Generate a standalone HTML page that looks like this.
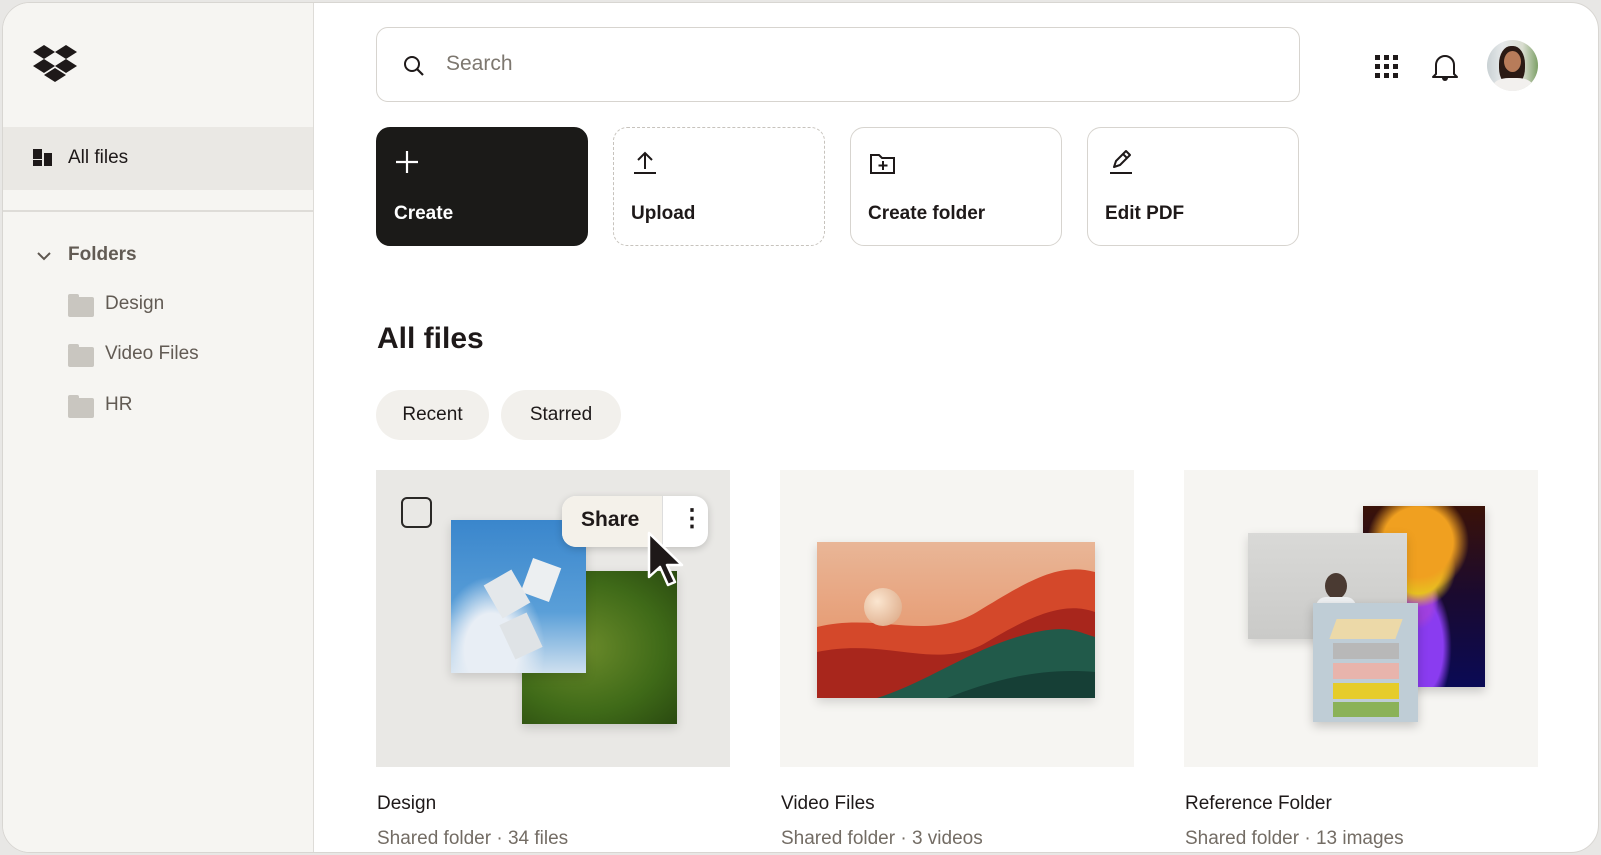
<!DOCTYPE html>
<html><head><meta charset="utf-8"><style>
*{box-sizing:border-box;margin:0;padding:0}
body{width:1601px;height:855px;background:#e8e7e5;font-family:"Liberation Sans",sans-serif;overflow:hidden;position:relative;color:#1e1919}
.frame{position:absolute;left:2px;top:2px;width:1597px;height:851px;background:#fff;border:1px solid #d8d6d2;border-radius:28px;overflow:hidden}
.side{position:absolute;left:0;top:0;width:311px;height:100%;background:#f6f5f2;border-right:1.5px solid #dedcd8}
.a{position:absolute}
.sel{left:0;top:124px;width:310px;height:63px;background:#eae8e4}
.t{position:absolute;white-space:nowrap}
.btn{position:absolute;top:124px;width:212px;height:119px;border:1.5px solid #d7d4cf;border-radius:14px}
.btn .t{left:17px;top:75px;font-size:19px;font-weight:bold}
.chip{position:absolute;top:387px;height:50px;background:#f2f0ec;border-radius:25px;font-size:19px;line-height:50px;text-align:center}
.card{position:absolute;top:467px;width:354px;height:297px;background:#f6f5f2;overflow:hidden}
.ct{position:absolute;top:790px;font-size:19px}
.cs{position:absolute;top:825px;font-size:19px;color:#736c64}
.fold{position:absolute;left:65px;width:26px;height:20px;background:#c9c6c0;border-radius:2px}
.fold:before{content:"";position:absolute;left:0;top:-3px;width:11px;height:4px;background:#c9c6c0;border-radius:2px 2px 0 0}
.ft{position:absolute;left:102px;font-size:19px;color:#625b54}
</style></head><body>
<div class="frame">
<div class="side">
<svg class="a" style="left:30px;top:42px" width="45" height="38" viewBox="0 0 45 38"><g fill="#1e1919"><path d="M11 0L22 7 11 14 0 7z"/><path d="M33 0L44 7 33 14 22 7z"/><path d="M11 14L22 21 11 28 0 21z"/><path d="M33 14L44 21 33 28 22 21z"/><path d="M22 23L33 30 22 37 11 30z"/></g></svg>
<div class="a sel"></div>
<svg class="a" style="left:30px;top:146px" width="20" height="18"><rect x="0" y="0" width="9" height="10" fill="#1e1919"/><rect x="0" y="11" width="9" height="6" fill="#1e1919"/><rect x="11" y="4" width="8" height="13" fill="#1e1919"/></svg>
<div class="t" style="left:65px;top:144px;font-size:19px">All files</div>
<div class="a" style="left:0;top:207px;width:310px;height:1.5px;background:#dedcd8"></div>
<svg class="a" style="left:33px;top:247px" width="16" height="12"><path d="M2 3l6 6 6-6" stroke="#5e5750" stroke-width="2" fill="none"/></svg>
<div class="t" style="left:65px;top:241px;font-size:19px;font-weight:bold;color:#625b54">Folders</div>
<div class="fold" style="top:294px"></div><div class="t ft" style="top:290px">Design</div>
<div class="fold" style="top:344px"></div><div class="t ft" style="top:340px">Video Files</div>
<div class="fold" style="top:395px"></div><div class="t ft" style="top:391px">HR</div>
</div>
<div class="a" style="left:373px;top:24px;width:924px;height:75px;border:1.5px solid #d7d4cf;border-radius:12px"></div>
<svg class="a" style="left:399px;top:51px" width="24" height="24"><circle cx="10" cy="10" r="7" stroke="#1e1919" stroke-width="2" fill="none"/><path d="M15 15l6 6" stroke="#1e1919" stroke-width="2.2"/></svg>
<div class="t" style="left:443px;top:49px;font-size:21px;color:#7d776f">Search</div>
<svg class="a" style="left:1372px;top:52px" width="25" height="25"><g fill="#1e1919"><rect x="0" y="0" width="5" height="5"/><rect x="9" y="0" width="5" height="5"/><rect x="18" y="0" width="5" height="5"/><rect x="0" y="9" width="5" height="5"/><rect x="9" y="9" width="5" height="5"/><rect x="18" y="9" width="5" height="5"/><rect x="0" y="18" width="5" height="5"/><rect x="9" y="18" width="5" height="5"/><rect x="18" y="18" width="5" height="5"/></g></svg>
<svg class="a" style="left:1428px;top:49px" width="28" height="30"><path d="M5 22V13a9 9 0 0 1 18 0v9l3 3H2z" stroke="#1e1919" stroke-width="2" fill="none" stroke-linejoin="round"/><path d="M11 26a3 3 0 0 0 6 0" fill="#1e1919"/></svg>
<div class="a" style="left:1484px;top:37px;width:51px;height:51px;border-radius:50%;background:linear-gradient(90deg,#c9d1d4,#e6e9ea 30%,#d9ddd0 70%,#7da067);overflow:hidden"><div class="a" style="left:12px;top:6px;width:26px;height:40px;border-radius:45%;background:#2a1a14"></div><div class="a" style="left:17px;top:11px;width:17px;height:21px;border-radius:50%;background:#b77c5a"></div><div class="a" style="left:6px;top:38px;width:40px;height:20px;border-radius:40%;background:#f2f0ee"></div></div>
<div class="btn" style="left:373px;background:#1b1a18;border-color:#1b1a18"><svg class="a" style="left:17px;top:21px" width="26" height="26"><path d="M13 2v22M2 13h22" stroke="#fff" stroke-width="2.2"/></svg><div class="t" style="color:#fff">Create</div></div>
<div class="btn" style="left:610px;border-style:dashed;border-color:#c7c3bd"><svg class="a" style="left:18px;top:22px" width="26" height="26"><path d="M13 19V3M6 10l7-7 7 7M2 23h22" stroke="#1e1919" stroke-width="2" fill="none"/></svg><div class="t">Upload</div></div>
<div class="btn" style="left:847px"><svg class="a" style="left:18px;top:24px" width="28" height="24"><path d="M2 3h8l3 3h12v15H2z" stroke="#1e1919" stroke-width="2" fill="none"/><path d="M14 9v9M9.5 13.5h9" stroke="#1e1919" stroke-width="2"/></svg><div class="t">Create folder</div></div>
<div class="btn" style="left:1084px"><svg class="a" style="left:20px;top:20px" width="26" height="28"><path d="M6 19l2-6 10-10 4 4-10 10zM15 6l4 4M2 25h22" stroke="#1e1919" stroke-width="2" fill="none" stroke-linejoin="round"/></svg><div class="t">Edit PDF</div></div>
<div class="t" style="left:374px;top:319px;font-size:30px;font-weight:bold">All files</div>
<div class="chip" style="left:373px;width:113px">Recent</div>
<div class="chip" style="left:498px;width:120px">Starred</div>
<div class="card" style="left:373px;background:#e9e8e5">
<div class="a" style="left:25px;top:27px;width:31px;height:31px;border:2px solid #2a2826;border-radius:6px"></div>
<div class="a" style="left:146px;top:101px;width:155px;height:153px;background:radial-gradient(ellipse at 40% 50%,#6a8a2a,#3f6a18 60%,#2a4a10);box-shadow:0 4px 10px rgba(0,0,0,.15)"></div>
<div class="a" style="left:75px;top:50px;width:135px;height:153px;background:radial-gradient(ellipse at 30% 85%,#e8eef5 0 20%,transparent 40%),linear-gradient(#3a86cc,#5a9fd8 60%,#cfe0ef);box-shadow:0 4px 10px rgba(0,0,0,.15)"></div>
<div class="a" style="left:150px;top:92px;width:30px;height:36px;background:#eceff1;transform:rotate(20deg)"></div>
<div class="a" style="left:115px;top:105px;width:32px;height:38px;background:#e4e8eb;transform:rotate(-30deg)"></div>
<div class="a" style="left:130px;top:147px;width:30px;height:38px;background:#dfe3e6;transform:rotate(-25deg)"></div>
<div class="a" style="left:186px;top:26px;width:146px;height:51px;border-radius:14px;background:#fff;box-shadow:0 2px 8px rgba(0,0,0,.18);overflow:hidden"><div class="a" style="left:0;top:0;width:101px;height:51px;background:#f4f1ea;border-right:1px solid #ddd"></div><div class="t" style="left:19px;top:12px;font-size:21px;font-weight:bold">Share</div><div class="t" style="left:118px;top:8px;font-size:24px;font-weight:bold">⋮</div></div>
<svg class="a" style="left:270px;top:60px" width="42" height="62"><path d="M3 3v44l11-10 8 18 7-3-8-17h15z" fill="#1e1919" stroke="#fff" stroke-width="2.5" stroke-linejoin="round"/></svg>
</div>
<div class="card" style="left:777px"><svg class="a" style="left:37px;top:72px;box-shadow:0 4px 10px rgba(0,0,0,.15)" width="278" height="156"><defs><linearGradient id="s" x1="0" y1="0" x2="0" y2="1"><stop offset="0" stop-color="#e9b697"/><stop offset="1" stop-color="#e58a5c"/></linearGradient></defs><rect width="278" height="156" fill="url(#s)"/><path d="M0 85C60 70 110 100 160 70S240 20 278 30V156H0z" fill="#d4482a"/><path d="M0 110C70 95 120 130 170 100S250 60 278 70V156H0z" fill="#a8261c"/><path d="M60 156C110 140 150 110 200 95S260 90 278 95V156z" fill="#215a4a"/><path d="M130 156C170 140 220 125 278 130V156z" fill="#163f36"/></svg><div class="a" style="left:84px;top:118px;width:38px;height:38px;border-radius:50%;background:radial-gradient(circle at 35% 35%,#fbe6d0,#d9a27e)"></div></div>
<div class="card" style="left:1181px">
<div class="a" style="left:179px;top:36px;width:122px;height:181px;background:radial-gradient(circle at 45% 20%,#f0a020 0 22%,transparent 32%),radial-gradient(circle at 45% 35%,#e8c020 0 18%,transparent 28%),radial-gradient(ellipse at 45% 52%,#a040e0 0 15%,transparent 22%),radial-gradient(ellipse at 50% 78%,#8a3cf0 0 22%,transparent 32%),linear-gradient(#3a1208,#1a0a30 50%,#0a0a55);box-shadow:0 4px 10px rgba(0,0,0,.2)"></div>
<div class="a" style="left:64px;top:63px;width:159px;height:106px;background:linear-gradient(#d9d9d7,#cacac8);box-shadow:0 4px 10px rgba(0,0,0,.15)"><div class="a" style="left:77px;top:40px;width:22px;height:26px;border-radius:50%;background:#4a3a32"></div><div class="a" style="left:68px;top:64px;width:40px;height:42px;background:#eef0f2;border-radius:10px 10px 0 0"></div></div>
<div class="a" style="left:129px;top:133px;width:105px;height:119px;background:#bfcdd6;box-shadow:0 4px 10px rgba(0,0,0,.2)"><div class="a" style="left:20px;top:16px;width:66px;height:20px;background:#ecd9a8;transform:skewX(-20deg)"></div><div class="a" style="left:20px;top:40px;width:66px;height:16px;background:#b8b8b8"></div><div class="a" style="left:20px;top:60px;width:66px;height:16px;background:#e8b4ac"></div><div class="a" style="left:20px;top:80px;width:66px;height:16px;background:#e6cc2a"></div><div class="a" style="left:20px;top:99px;width:66px;height:15px;background:#8bb258"></div></div>
</div>
<div class="ct" style="left:374px">Design</div><div class="cs" style="left:374px">Shared folder · 34 files</div>
<div class="ct" style="left:778px">Video Files</div><div class="cs" style="left:778px">Shared folder · 3 videos</div>
<div class="ct" style="left:1182px">Reference Folder</div><div class="cs" style="left:1182px">Shared folder · 13 images</div>
</div>
</body></html>
